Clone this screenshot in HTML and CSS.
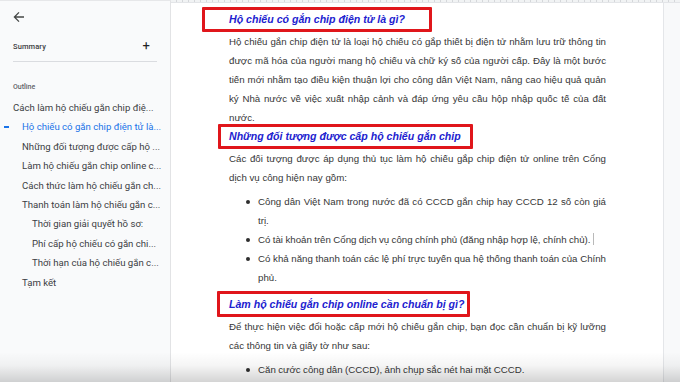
FILE: index.html
```html
<!DOCTYPE html>
<html lang="vi">
<head>
<meta charset="utf-8">
<title>Hộ chiếu gắn chip</title>
<link rel="stylesheet" href="styles.css">
</head>
<body>
<div class="app">
  <aside class="sidebar">
    <button class="back" aria-label="Back">
      <svg width="12" height="12" viewBox="0 0 12 12"><path d="M11 6H1.6M6 1.4L1.4 6 6 10.6" fill="none" stroke="#444746" stroke-width="1.3"/></svg>
    </button>
    <div class="summary">
      <span>Summary</span>
      <span class="plus">+</span>
    </div>
    <div class="divider"></div>
    <div class="outline-label">Outline</div>
    <ul class="outline">
      <li class="lvl1">Cách làm hộ chiếu gắn chip điệ...</li>
      <li class="lvl2 active">Hộ chiếu có gắn chip điện tử là...</li>
      <li class="lvl2">Những đối tượng được cấp hộ ...</li>
      <li class="lvl2">Làm hộ chiếu gắn chip online c...</li>
      <li class="lvl2">Cách thức làm hộ chiếu gắn ch...</li>
      <li class="lvl2">Thanh toán làm hộ chiếu gắn c...</li>
      <li class="lvl3">Thời gian giải quyết hồ sơ:</li>
      <li class="lvl3">Phí cấp hộ chiếu có gắn chi...</li>
      <li class="lvl3">Thời hạn của hộ chiếu gắn c...</li>
      <li class="lvl2">Tạm kết</li>
    </ul>
  </aside>
  <main class="workspace">
    <div class="ruler"></div>
    <div class="canvas">
      <article class="page">
        <h2 class="heading"><span class="mark mark-wide">Hộ chiếu có gắn chip điện tử là gì?</span></h2>
        <p>Hộ chiếu gắn chip điện tử là loại hộ chiếu có gắp thiết bị điện tử nhằm lưu trữ thông tin được mã hóa của người mang hộ chiếu và chữ ký số của người cấp. Đây là một bước tiến mới nhằm tạo điều kiện thuận lợi cho công dân Việt Nam, nâng cao hiệu quả quản ký Nhà nước về việc xuất nhập cảnh và đáp ứng yêu cầu hộp nhập quốc tế của đất nước.</p>
        <h2 class="heading"><span class="mark">Những đối tượng được cấp hộ chiếu gắn chip</span></h2>
        <p>Các đối tượng được áp dụng thủ tục làm hộ chiếu gắp chip điện tử online trên Cổng dịch vụ công hiện nay gồm:</p>
        <ul class="bullets">
          <li>Công dân Việt Nam trong nước đã có CCCD gắn chip hay CCCD 12 số còn giá trị.</li>
          <li>Có tài khoản trên Cổng dịch vụ công chính phủ (đăng nhập hợp lệ, chính chủ).<span class="caret"></span></li>
          <li>Có khả năng thanh toán các lệ phí trực tuyến qua hệ thống thanh toán của Chính phủ.</li>
        </ul>
        <h2 class="heading heading-3"><span class="mark mark-tight">Làm hộ chiếu gắn chip online cần chuẩn bị gì?</span></h2>
        <p>Để thực hiện việc đổi hoặc cấp mới hộ chiếu gắn chip, bạn đọc cần chuẩn bị kỹ lưỡng các thông tin và giấy tờ như sau:</p>
        <ul class="bullets">
          <li>Căn cước công dân (CCCD), ảnh chụp sắc nét hai mặt CCCD.</li>
        </ul>
      </article>
      <div class="gutter"></div>
    </div>
  </main>
</div>
<div class="bottom-shade"></div>
</body>
</html>
```
FILE: styles.css
```css
* { box-sizing: border-box; }
html, body {
  margin: 0;
  width: 680px;
  height: 382px;
  overflow: hidden;
  background: #ffffff;
}
body { position: relative; }
.app {
  display: flex;
  width: 680px;
  height: 382px;
}

/* Sidebar */
.sidebar {
  width: 171px;
  flex: none;
  background: #f9fafb;
  border-right: 1px solid #e2e3e5;
  border-top: 1px solid #e6e7e9;
  padding: 10px 13px 0 13px;
  font-family: Roboto, "Noto Sans", sans-serif;
  color: #3c4043;
}
.back {
  display: block;
  border: 0;
  padding: 0;
  background: none;
  width: 12px;
  height: 12px;
}
.back svg { display: block; }
.summary {
  margin-top: 16px;
  display: flex;
  justify-content: space-between;
  align-items: center;
  height: 14px;
  font-size: 7.5px;
  font-weight: 500;
  letter-spacing: 0.1px;
  padding-right: 7px;
}
.plus {
  font-size: 13px;
  font-weight: 400;
  color: #202124;
  line-height: 14px;
}
.divider {
  margin-top: 8px;
  height: 1px;
  background: #dadce0;
  width: 144px;
}
.outline-label {
  margin-top: 19px;
  font-size: 7px;
  line-height: 12px;
  color: #5f6368;
  font-weight: 500;
}
.outline {
  list-style: none;
  margin: 5px 0 0;
  padding: 0;
}
.outline li {
  font-size: 9.6px;
  line-height: 19.4px;
  height: 19.4px;
  white-space: nowrap;
  position: relative;
  color: #3c4043;
}
.outline .lvl2 { padding-left: 9px; }
.outline .lvl3 { padding-left: 19px; }
.outline .active { color: #1a73e8; }
.outline .active::before {
  content: "";
  position: absolute;
  left: -9px;
  top: 9px;
  width: 5px;
  height: 1.5px;
  background: #1a73e8;
}

/* Workspace */
.workspace {
  flex: 1;
  display: flex;
  flex-direction: column;
  min-width: 0;
}
.ruler {
  height: 3px;
  flex: none;
  background-color: #f1f3f4;
  background-image: repeating-linear-gradient(to right, transparent 0, transparent 5px, #d5d7da 5px, #d5d7da 6px);
  border-bottom: 1px solid #e3e5e8;
}
.canvas {
  flex: 1;
  display: flex;
}
.page {
  flex: 1;
  background: #ffffff;
  padding: 7px 57px 0 58px;
  font-family: "Liberation Sans", Arial, sans-serif;
  color: #363636;
  font-size: 9.7px;
  line-height: 19px;
}
.gutter {
  width: 17px;
  flex: none;
  background: #f8f9fa;
  border-left: 1px solid #e4e6e9;
}

.heading {
  margin: 0 0 3px;
  font-size: 10.6px;
  line-height: 19px;
  font-weight: bold;
  font-style: italic;
  color: #2121cf;
}
.mark {
  position: relative;
  display: inline-block;
}
.mark::after {
  content: "";
  position: absolute;
  top: -3px;
  bottom: -3px;
  left: -11px;
  right: -12px;
  border: 3px solid #e0161b;
  border-radius: 1px;
}
.mark-wide::after { left: -27px; right: -27px; }
.mark-tight::after { left: -12px; right: -6px; }
.heading-3 { margin-top: 8px; }
.heading-3 .mark::after { top: -4px; }

.page p {
  margin: 0;
  text-align: justify;
}
.bullets {
  margin: 5px 0 0;
  padding: 0 0 0 29px;
  list-style: none;
  word-spacing: -0.3px;
}
.bullets li {
  position: relative;
  text-align: justify;
}
.bullets li::before {
  content: "";
  position: absolute;
  left: -12px;
  top: 8px;
  width: 4px;
  height: 4px;
  border-radius: 50%;
  background: #2e2e2e;
}
.caret {
  display: inline-block;
  width: 1px;
  height: 12px;
  margin-left: 2px;
  vertical-align: -2px;
  background: #b9b9b9;
}

.bottom-shade {
  position: absolute;
  left: 0;
  right: 0;
  bottom: 0;
  height: 30px;
  pointer-events: none;
  background: linear-gradient(to bottom, rgba(0,0,0,0) 0%, rgba(0,0,0,0.04) 45%, rgba(0,0,0,0.12) 80%, rgba(0,0,0,0.17) 100%);
}
```
